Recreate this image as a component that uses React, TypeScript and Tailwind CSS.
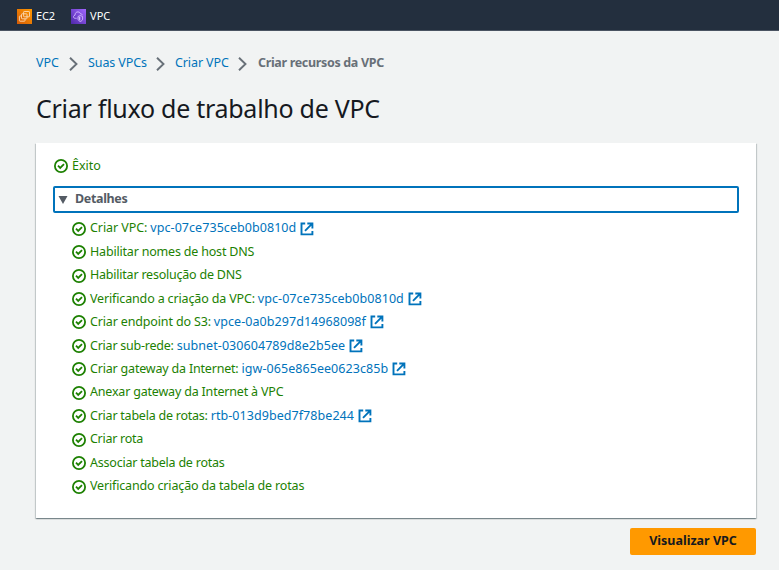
import React from 'react';

type Step = { label: string; link?: string; tracking: string };

const steps: Step[] = [
  { label: 'Criar VPC:', link: 'vpc-07ce735ceb0b0810d', tracking: 'tracking-[-0.07px]' },
  { label: 'Habilitar nomes de host DNS', tracking: 'tracking-[-0.19px]' },
  { label: 'Habilitar resolução de DNS', tracking: 'tracking-[-0.22px]' },
  { label: 'Verificando a criação da VPC:', link: 'vpc-07ce735ceb0b0810d', tracking: 'tracking-[-0.15px]' },
  { label: 'Criar endpoint do S3:', link: 'vpce-0a0b297d14968098f', tracking: 'tracking-[-0.15px]' },
  { label: 'Criar sub-rede:', link: 'subnet-030604789d8e2b5ee', tracking: 'tracking-[-0.23px]' },
  { label: 'Criar gateway da Internet:', link: 'igw-065e865ee0623c85b', tracking: 'tracking-[-0.19px]' },
  { label: 'Anexar gateway da Internet à VPC', tracking: 'tracking-[-0.19px]' },
  { label: 'Criar tabela de rotas:', link: 'rtb-013d9bed7f78be244', tracking: 'tracking-[-0.23px]' },
  { label: 'Criar rota', tracking: 'tracking-[-0.28px]' },
  { label: 'Associar tabela de rotas', tracking: 'tracking-[-0.22px]' },
  { label: 'Verificando criação da tabela de rotas', tracking: 'tracking-[-0.16px]' },
];

function CheckIcon() {
  return (
    <svg className="h-[14px] w-[14px] shrink-0" viewBox="0 0 14 14" fill="none" stroke="#1d8102" strokeWidth="1.8">
      <circle cx="7" cy="7" r="6.1" />
      <path d="M4 6.700 6.200 8.900 10 5.100" />
    </svg>
  );
}

function ExternalIcon() {
  return (
    <svg className="ml-1 h-[14px] w-[14px] shrink-0" viewBox="0 0 14 14" fill="none" stroke="#0073bb" strokeWidth="1.9">
      <path d="M5.200 1.500H1.500v10.900h10.900V8.900" />
      <path d="M7.300 1.500h5.100v5.100M12.200 1.700 5 8.900" />
    </svg>
  );
}

function Chevron() {
  return (
    <svg className="mt-px h-[14px] w-[9px] shrink-0" viewBox="0 0 9 14" fill="none" stroke="#687078" strokeWidth="1.9">
      <path d="M1 .7l6.500 6.300L1 13.300" />
    </svg>
  );
}

function Ec2Icon() {
  return (
    <svg className="h-[15px] w-[15px]" viewBox="0 0 15 15" fill="none" stroke="#fbd9b5" strokeWidth="0.9">
      <defs>
        <linearGradient id="ec2" x1="0" y1="1" x2="1" y2="0">
          <stop stopColor="#d45b07" />
          <stop offset="1" stopColor="#ff9900" />
        </linearGradient>
      </defs>
      <path d="M0 0h15v15H0z" fill="url(#ec2)" stroke="none" />
      <rect x="6.600" y="2.500" width="5.900" height="5.300" rx="0.6" />
      <rect x="4.500" y="4.800" width="5.500" height="5" rx="0.6" />
      <path d="M4.500 7H3q-.6 0-.6.600v4q0 .6.600.6h4.400q.6 0 .6-.6V9.800" />
    </svg>
  );
}

function VpcIcon() {
  return (
    <svg className="h-[15px] w-[15px]" viewBox="0 0 15 15" fill="none" stroke="#d2baff" strokeWidth="0.9">
      <defs>
        <linearGradient id="vpc" x1="0" y1="1" x2="1" y2="0">
          <stop stopColor="#4d27a8" />
          <stop offset="1" stopColor="#a166ff" />
        </linearGradient>
      </defs>
      <path d="M0 0h15v15H0z" fill="url(#vpc)" stroke="none" />
      <path d="M5.600 9.300H4.400C3 9.300 2.300 8.400 2.500 7.500c.2-.8.8-1.200 1.500-1.300C4 4 5.300 2.800 7 2.900c1.500.1 2.300 1 2.600 2 1-.1 1.600.4 1.900 1.300" />
      <path d="M9.300 6.500 11.600 7.500v2.500c0 1.200-1 2-2.300 2.600-1.300-.6-2.300-1.400-2.300-2.600V7.500z" />
      <path d="M9.300 7.500v4.200c-1-.5-1.500-1-1.500-1.800V8.100z" fill="#d2baff" stroke="none" />
    </svg>
  );
}

export default function App() {
  return (
    <div className="flex h-[570px] w-[779px] flex-col overflow-hidden whitespace-nowrap bg-[#f1f3f3] font-['Noto_Sans',sans-serif] text-[12.5px] text-[#16191f]">
      <header className="flex h-[31px] shrink-0 items-center gap-[16px] border-b border-[#4a5361] bg-[#232f3e] pt-[3px] pl-[17px] text-[11px] text-white">
        <a className="flex items-center gap-1"><Ec2Icon /><span className="tracking-[-0.1px]">EC2</span></a>
        <a className="flex items-center gap-1"><VpcIcon /><span>VPC</span></a>
      </header>

      <nav className="mt-[22px] ml-9 flex h-5 items-center text-[#0073bb]">
        <span className="w-[33px]">VPC</span>
        <Chevron />
        <span className="ml-[10px] w-[68px] tracking-[-0.1px]">Suas VPCs</span>
        <Chevron />
        <span className="ml-[10px] w-[63px] tracking-[-0.1px]">Criar VPC</span>
        <Chevron />
        <span className="ml-[11px] font-bold tracking-[-0.33px] text-[#687078]">Criar recursos da VPC</span>
      </nav>

      <h1 className="mt-[17px] ml-9 text-[25px] leading-9 tracking-[-0.27px]">Criar fluxo de trabalho de VPC</h1>

      <main className="mt-[17px] mr-[23px] ml-9 h-[375px] shrink-0 bg-white px-[17px] pt-[14px] shadow-[0_1px_1px_0_rgba(0,28,36,0.3),1px_1px_1px_0_rgba(0,28,36,0.15),-1px_1px_1px_0_rgba(0,28,36,0.15)]">
        <div className="flex h-[18px] items-center gap-1 pl-[1px] text-[#1d8102]">
          <CheckIcon />
          <span>Êxito</span>
        </div>
        <div className="mt-[11px] flex h-[27px] w-[686px] items-center rounded-[2px] border-2 border-[#0073bb] pb-px pl-[3px] font-bold text-[#545b64]">
          <svg className="mt-[2px] h-[8px] w-[10px]" viewBox="0 0 10 8"><path d="M.5 0h9L5 8z" fill="#545b64" /></svg>
          <span className="ml-[7px] tracking-[-0.35px]">Detalhes</span>
        </div>
        <ul className="mt-[4px] ml-[19px] text-[#1d8102]">
          {steps.map((s) => (
            <li key={s.label} className="flex h-[23.45px] items-center">
              <CheckIcon />
              <span className={`ml-1 ${s.tracking}`}>{s.label}</span>
              {s.link && (
                <a className="ml-[3px] flex items-center text-[#0073bb]"><span className="tracking-[0.06px]">{s.link}</span><ExternalIcon /></a>
              )}
            </li>
          ))}
        </ul>
      </main>

      <button className="mt-[10px] mr-[23px] h-[27px] w-[126px] shrink-0 self-end rounded-[2px] bg-[#ff9900] pb-px text-[12.5px] font-bold">Visualizar VPC</button>
    </div>
  );
}
